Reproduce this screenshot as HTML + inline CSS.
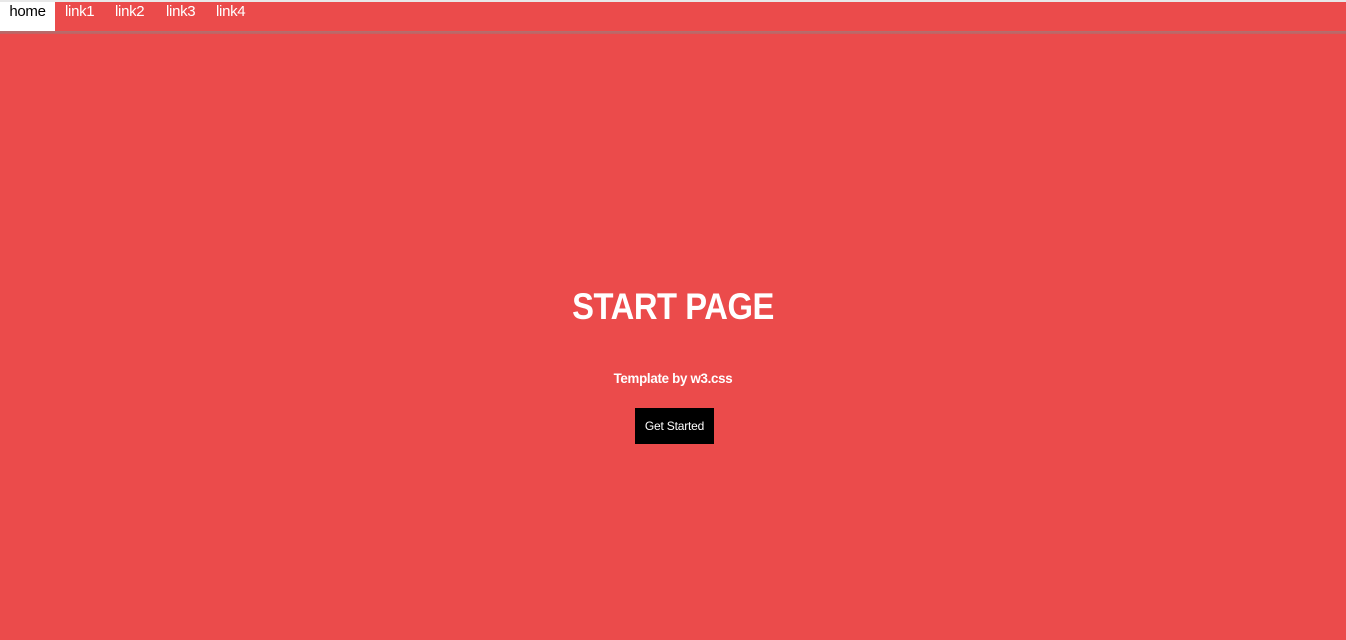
<!DOCTYPE html>
<html><head><style>
body{margin:0;width:1346px;height:640px;background:#eb4b4b;font-family:"Liberation Sans",sans-serif;overflow:hidden;position:relative}
.top{position:absolute;top:0;left:0;width:1346px;height:2px;background:#e8e8e8}
.nav{position:absolute;top:2px;left:0;width:1346px;height:29px;background:#eb4b4b}
.nav span{position:absolute;top:0;height:29px;line-height:20px;font-size:15px;color:#fff;letter-spacing:-0.3px}
.nav .home{left:0;width:55px;background:#fff;color:#000;text-align:center}
.sh{position:absolute;top:31px;left:0;width:1346px;height:3px;background:linear-gradient(#b07070,#c86060)}
h1{position:absolute;top:286px;left:0;width:1346px;margin:0;text-align:center;color:#fff;font-size:37px;font-weight:bold;letter-spacing:-0.5px;transform:scaleX(0.885)}
.sub{position:absolute;top:370px;left:0;width:1346px;text-align:center;color:#fff;font-size:14px;font-weight:bold;letter-spacing:-0.3px;transform:scaleX(0.95)}
.btn{position:absolute;top:408px;left:635px;width:79px;height:36px;background:#000;color:#fff;font-size:12px;line-height:37px;text-align:center;letter-spacing:-0.2px}
</style></head><body>
<div class="top"></div>
<div class="nav"><span class="home">home</span><span style="left:65px">link1</span><span style="left:115px">link2</span><span style="left:166px">link3</span><span style="left:216px">link4</span></div>
<div class="sh"></div>
<h1>START PAGE</h1>
<div class="sub">Template by w3.css</div>
<div class="btn">Get Started</div>
</body></html>
